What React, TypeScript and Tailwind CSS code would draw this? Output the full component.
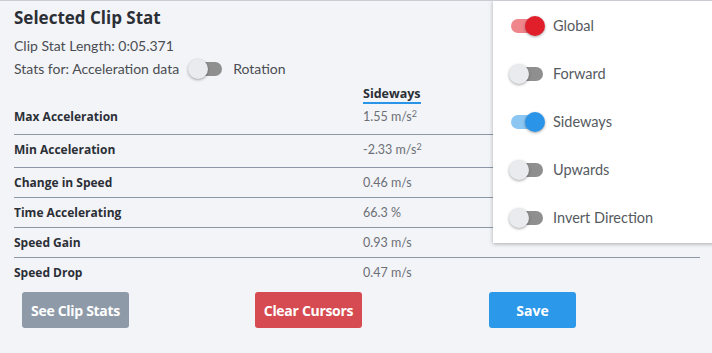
import React from 'react';

type Row = { label: string; value: React.ReactNode };

const rows: Row[] = [
  { label: 'Max Acceleration', value: <>1.55 m/s<sup className="text-[9px]">2</sup></> },
  { label: 'Min Acceleration', value: <>-2.33 m/s<sup className="text-[9px]">2</sup></> },
  { label: 'Change in Speed', value: '0.46 m/s' },
  { label: 'Time Accelerating', value: '66.3 %' },
  { label: 'Speed Gain', value: '0.93 m/s' },
  { label: 'Speed Drop', value: '0.47 m/s' },
];

function Toggle({ on, color }: { on?: boolean; color?: 'red' | 'blue' }) {
  const track = !on ? 'bg-[#8f8f8f]' : color === 'red' ? 'bg-[#ef868c]' : 'bg-[#8cc6f2]';
  const thumb = !on ? 'bg-[#e9ebef]' : color === 'red' ? 'bg-[#e01f2b]' : 'bg-[#2a95e8]';
  return (
    <span className="relative inline-block w-[36px] h-[20px] shrink-0">
      <span className={`absolute left-[2px] top-[3px] w-[32px] h-[14px] rounded-full ${track}`} />
      <span
        className={`absolute top-0 w-[20px] h-[20px] rounded-full shadow-[0_1px_3px_rgba(0,0,0,0.35)] ${thumb} ${on ? 'left-[16px]' : 'left-0'}`}
      />
    </span>
  );
}

const options = [
  { label: 'Global', on: true, color: 'red' as const },
  { label: 'Forward', on: false },
  { label: 'Sideways', on: true, color: 'blue' as const },
  { label: 'Upwards', on: false },
  { label: 'Invert Direction', on: false },
];

export default function App() {
  return (
    <div className="relative w-[712px] h-[353px] overflow-hidden bg-[#f3f4f8] border-t border-[#c9ccd3] font-['Lato',sans-serif]">
      <div className="pl-[14px] pt-[6px]">
        <h2 className="font-['Open_Sans',sans-serif] font-bold text-[17px] leading-[22px] text-[#2b2f36]">Selected Clip Stat</h2>
        <div className="mt-[6px] text-[14px] leading-[22px] text-[#4a4d52]">Clip Stat Length: 0:05.371</div>
        <div className="mt-[1px] flex items-center h-[22px] text-[14px] leading-[22px] text-[#4a4d52]">
          <span>Stats for: Acceleration data</span>
          <span className="ml-[9px] mr-[9px] flex"><Toggle /></span>
          <span>Rotation</span>
        </div>
      </div>

      <div className="mt-[4px] ml-[14px] mr-[12px] font-['Open_Sans',sans-serif]">
        <div className="flex h-[20px]">
          <div className="w-[349px]" />
          <div className="h-[20px] pt-[2px] text-[12.5px] leading-[16px] font-bold text-[#2b2f36] border-b-2 border-[#2a95e8]">Sideways</div>
        </div>
        {rows.map((r, i) => (
          <div
            key={r.label}
            className={`flex items-start ${i === 0 ? 'h-[31px] pt-[5px]' : i === 1 ? 'h-[33px] pt-[7px]' : 'h-[30px] pt-[7px]'} ${i < rows.length - 1 ? 'border-b border-[#8c97a6]' : ''}`}
          >
            <div className="w-[349px] text-[12px] leading-[16px] font-bold text-[#2b2f36]">{r.label}</div>
            <div className="font-['Lato',sans-serif] text-[12.5px] leading-[16px] text-[#6b6f75]">{r.value}</div>
          </div>
        ))}
      </div>

      <div className="mt-[4px] flex font-['Open_Sans',sans-serif] text-[14px] font-bold text-white">
        <div className="ml-[22px] w-[107px] h-[36px] rounded-[3px] bg-[#8e9aa8] flex items-center justify-center tracking-[-0.3px]">See Clip Stats</div>
        <div className="ml-[126px] w-[107px] h-[36px] rounded-[3px] bg-[#d64b51] flex items-center justify-center tracking-[-0.3px]">Clear Cursors</div>
        <div className="ml-[127px] w-[87px] h-[36px] rounded-[3px] bg-[#2c98e9] flex items-center justify-center">Save</div>
      </div>

      <div className="absolute left-[493px] top-[-1px] w-[230px] h-[243px] bg-white shadow-[0_1px_4px_rgba(0,0,0,0.3)] pt-[2px] pl-[16px]">
        {options.map((o) => (
          <div key={o.label} className="flex items-center h-[48px]">
            <Toggle on={o.on} color={o.color} />
            <span className="ml-[8px] text-[14.5px] text-[#555a60]">{o.label}</span>
          </div>
        ))}
      </div>
    </div>
  );
}
